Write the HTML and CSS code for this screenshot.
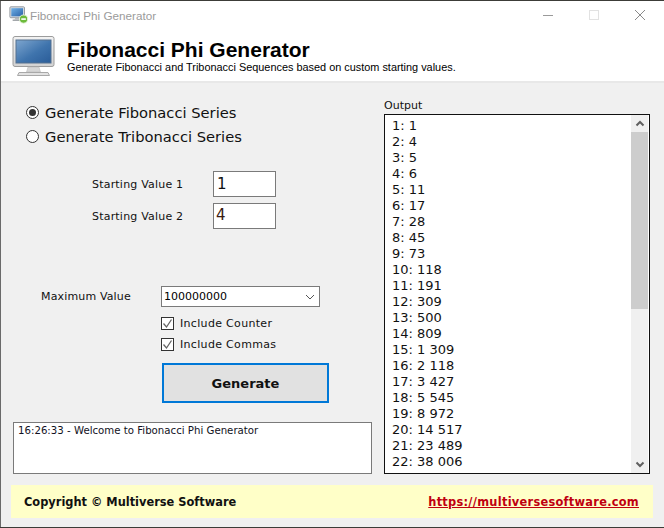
FILE: index.html
```html
<!DOCTYPE html>
<html lang="en">
<head>
<meta charset="utf-8">
<title>Fibonacci Phi Generator</title>
<link rel="stylesheet" href="styles.css">
</head>
<body>
<div class="window">
  <div class="titlebar">
    <svg class="app-icon" width="20" height="20" viewBox="0 0 22 20">
      <defs><linearGradient id="s1" x1="0" y1="0" x2="1" y2="1"><stop offset="0" stop-color="#6fb0e6"/><stop offset="1" stop-color="#2a62a8"/></linearGradient></defs>
      <rect x="1" y="1" width="16" height="12" rx="1" fill="#dfe3e8" stroke="#8a8f96"/>
      <rect x="2.500" y="2.500" width="13" height="9" fill="url(#s1)"/>
      <path d="M7 13h4l1 2H6z" fill="#b4b8bd"/>
      <path d="M4 15h10v1.500H4z" fill="#9a9ea3"/>
      <circle cx="16" cy="14.500" r="4.500" fill="#6dbb3c" stroke="#e8f4df" stroke-width="1"/>
      <path d="M13.500 14.500h5" stroke="#fff" stroke-width="1.800"/>
    </svg>
    <span class="title-text">Fibonacci Phi Generator</span>
    <div class="controls">
      <svg width="12" height="12" viewBox="0 0 12 12"><path d="M1 6.500h10" stroke="#9a9a9a" stroke-width="1"/></svg>
      <svg width="12" height="12" viewBox="0 0 12 12"><rect x="1.500" y="1.500" width="9" height="9" fill="none" stroke="#e2e2e2"/></svg>
      <svg width="12" height="12" viewBox="0 0 12 12"><path d="M1 1l10 10M11 1L1 11" stroke="#8a8a8a" stroke-width="1" fill="none"/></svg>
    </div>
  </div>
  <header class="banner">
    <svg class="monitor" width="44" height="42" viewBox="0 0 44 42">
      <defs>
        <linearGradient id="s2" x1="0" y1="0" x2="1" y2="1"><stop offset="0" stop-color="#7ea6cf"/><stop offset=".55" stop-color="#3f74ad"/><stop offset="1" stop-color="#2a5c98"/></linearGradient>
        <linearGradient id="b2" x1="0" y1="0" x2="0" y2="1"><stop offset="0" stop-color="#f3f3f3"/><stop offset="1" stop-color="#d2d2d2"/></linearGradient>
      </defs>
      <rect x="1" y="0.500" width="41" height="30" rx="2" fill="url(#b2)" stroke="#9c9c9c"/>
      <rect x="4" y="4" width="35" height="23" fill="url(#s2)" stroke="#54718f"/>
      <path d="M16 31h11l1.500 5h-14z" fill="#d6d6d6" stroke="#b5b5b5" stroke-width=".5"/>
      <path d="M7 36.500h29l1.500 3h-32z" fill="#e2e2e2" stroke="#a8a8a8"/>
    </svg>
    <div class="banner-text">
      <h1>Fibonacci Phi Generator</h1>
      <p>Generate Fibonacci and Tribonacci Sequences based on custom starting values.</p>
    </div>
  </header>
  <main class="content">
    <section class="left">
      <div class="radios">
        <label class="radio"><span class="radio-dot on"></span>Generate Fibonacci Series</label>
        <label class="radio"><span class="radio-dot"></span>Generate Tribonacci Series</label>
      </div>
      <div class="starts">
        <div class="start-row"><span class="start-label">Starting Value 1</span><span class="field">1</span></div>
        <div class="start-row"><span class="start-label">Starting Value 2</span><span class="field second">4</span></div>
      </div>
      <div class="max-row">
        <span class="max-label">Maximum Value</span>
        <div class="combo"><span>100000000</span>
          <svg width="10" height="6" viewBox="0 0 10 6"><path d="M1 1l4 4 4-4" fill="none" stroke="#555" stroke-width="1"/></svg>
        </div>
      </div>
      <label class="check first"><span class="box"><svg width="11" height="11" viewBox="0 0 11 11"><path d="M1.500 5.500l3 3.500 5-7.500" fill="none" stroke="#666" stroke-width="1.300"/></svg></span>Include Counter</label>
      <label class="check"><span class="box"><svg width="11" height="11" viewBox="0 0 11 11"><path d="M1.500 5.500l3 3.500 5-7.500" fill="none" stroke="#666" stroke-width="1.300"/></svg></span>Include Commas</label>
      <button class="generate" type="button">Generate</button>
      <div class="log">16:26:33 - Welcome to Fibonacci Phi Generator</div>
    </section>
    <section class="right">
      <div class="output-label">Output</div>
      <div class="output">
        <div class="lines">
          <div>1: 1</div><div>2: 4</div><div>3: 5</div><div>4: 6</div><div>5: 11</div><div>6: 17</div>
          <div>7: 28</div><div>8: 45</div><div>9: 73</div><div>10: 118</div><div>11: 191</div><div>12: 309</div>
          <div>13: 500</div><div>14: 809</div><div>15: 1 309</div><div>16: 2 118</div><div>17: 3 427</div><div>18: 5 545</div>
          <div>19: 8 972</div><div>20: 14 517</div><div>21: 23 489</div><div>22: 38 006</div>
        </div>
        <div class="scrollbar">
          <svg class="arrow" width="16" height="17" viewBox="0 0 16 17"><path d="M4.500 10.500L8 7l3.500 3.500" fill="none" stroke="#606060" stroke-width="2"/></svg>
          <div class="track"><div class="thumb"></div></div>
          <svg class="arrow" width="16" height="17" viewBox="0 0 16 17"><path d="M4.500 6.500L8 10l3.500-3.500" fill="none" stroke="#606060" stroke-width="2"/></svg>
        </div>
      </div>
    </section>
  </main>
  <footer class="footer">
    <span class="copyright">Copyright © Multiverse Software</span>
    <a class="link" href="#">https://multiversesoftware.com</a>
  </footer>
</div>
</body>
</html>
```
FILE: styles.css
```css
* { box-sizing: border-box; }
html, body { margin: 0; padding: 0; background: #3c3c38; }
body { width: 664px; height: 528px; overflow: hidden; font-family: "DejaVu Sans", Verdana, sans-serif; color: #000; }
.window { width: 664px; height: 526px; margin-top: 1px; border-left: 1px solid #6a6a6a; background: #f0f0f0; display: flex; flex-direction: column; }
.titlebar { height: 29px; background: #fff; display: flex; align-items: center; padding-left: 8px; }
.app-icon { margin-right: 1px; margin-top: -2px; }
.title-text { font-family: "Liberation Sans", Arial, sans-serif; font-size: 11.700px; color: #9b9b9b; }
.controls { margin-left: auto; display: flex; gap: 34px; margin-right: 18px; margin-top: -1px; }
.banner { height: 53px; background: #fff; border-bottom: 2px solid #e8e8e8; display: flex; padding-left: 11px; }
.monitor { margin-top: 6px; }
.banner-text { margin-left: 11px; padding-top: 8px; }
h1 { margin: 0; font-family: "Liberation Sans", Arial, sans-serif; font-weight: 700; font-size: 21px; line-height: 23px; }
.banner-text p { margin: 0; font-family: "Liberation Sans", Arial, sans-serif; font-size: 10.900px; line-height: 12px; }
.content { flex: 1; display: flex; min-height: 0; }
.left { width: 383px; padding-left: 12px; }
.radios { padding-top: 17px; padding-left: 13px; }
.radio { display: flex; align-items: center; height: 24px; font-size: 14.700px; color: #111; }
.radio-dot { width: 13px; height: 13px; border: 1px solid #333; border-radius: 50%; background: #fff; margin-right: 6px; margin-top: 1px; display: flex; align-items: center; justify-content: center; }
.radio-dot.on::after { content: ""; width: 7px; height: 7px; border-radius: 50%; background: #333; }
.starts { margin-top: 23px; padding-left: 79px; }
.start-row { display: flex; align-items: center; height: 26px; margin-bottom: 6px; }
.start-label { width: 121px; font-size: 11px; letter-spacing: .2px; color: #111; }
.field { width: 63px; height: 26px; border: 1px solid #7a7a7a; background: #fff; font-size: 15px; line-height: 24px; padding-left: 3px; color: #111; }
.field.second { color: #3a1a10; line-height: 22px; padding-left: 2px; }
.max-row { display: flex; align-items: center; margin-top: 57px; padding-left: 28px; }
.max-label { width: 120px; font-size: 11px; letter-spacing: .15px; color: #111; }
.combo { width: 159px; height: 21px; border: 1px solid #7a7a7a; background: #fff; display: flex; align-items: center; justify-content: space-between; padding: 0 4px 0 2px; font-size: 11px; }
.check { display: flex; align-items: center; height: 14px; margin-left: 148px; margin-top: 7px; font-size: 11px; letter-spacing: .32px; color: #111; }
.check.first { margin-top: 9px; }
.box { width: 13px; height: 13px; border: 1px solid #333; background: #fff; margin-right: 6px; display: flex; align-items: center; justify-content: center; }
.generate { display: block; width: 167px; height: 40px; margin: 12px 0 0 149px; border: 2px solid #0078d7; background: #e1e1e1; font-family: "DejaVu Sans", Verdana, sans-serif; font-size: 13px; font-weight: 700; color: #111; padding: 0; }
.log { width: 359px; height: 52px; margin: 19px 0 0 0; border: 1px solid #7a7a7a; background: #fff; font-size: 10.200px; line-height: 12px; padding: 2px 4px; color: #112; }
.right { width: 266px; padding-top: 16px; }
.output-label { font-size: 11px; line-height: 13px; color: #111; margin-bottom: 2px; }
.output { width: 266px; height: 360px; border: 1px solid #111; background: #fff; display: flex; justify-content: space-between; }
.lines { padding: 3px 0 0 7px; font-size: 13px; line-height: 16px; color: #111; white-space: nowrap; }
.scrollbar { width: 17px; height: 358px; margin-right: 1px; background: #f0f0f0; display: flex; flex-direction: column; }
.arrow { display: block; flex: none; margin-left: .5px; }
.track { flex: 1; }
.thumb { height: 177px; background: #cdcdcd; }
.footer { width: 642px; height: 33px; margin: 10px 0 9px 10px; background: #ffffc8; display: flex; align-items: center; justify-content: space-between; padding: 0 14px 0 13px; font-size: 11.400px; font-weight: 700; }
.copyright { color: #111; }
.link { color: #c00010; letter-spacing: .27px; }
```
